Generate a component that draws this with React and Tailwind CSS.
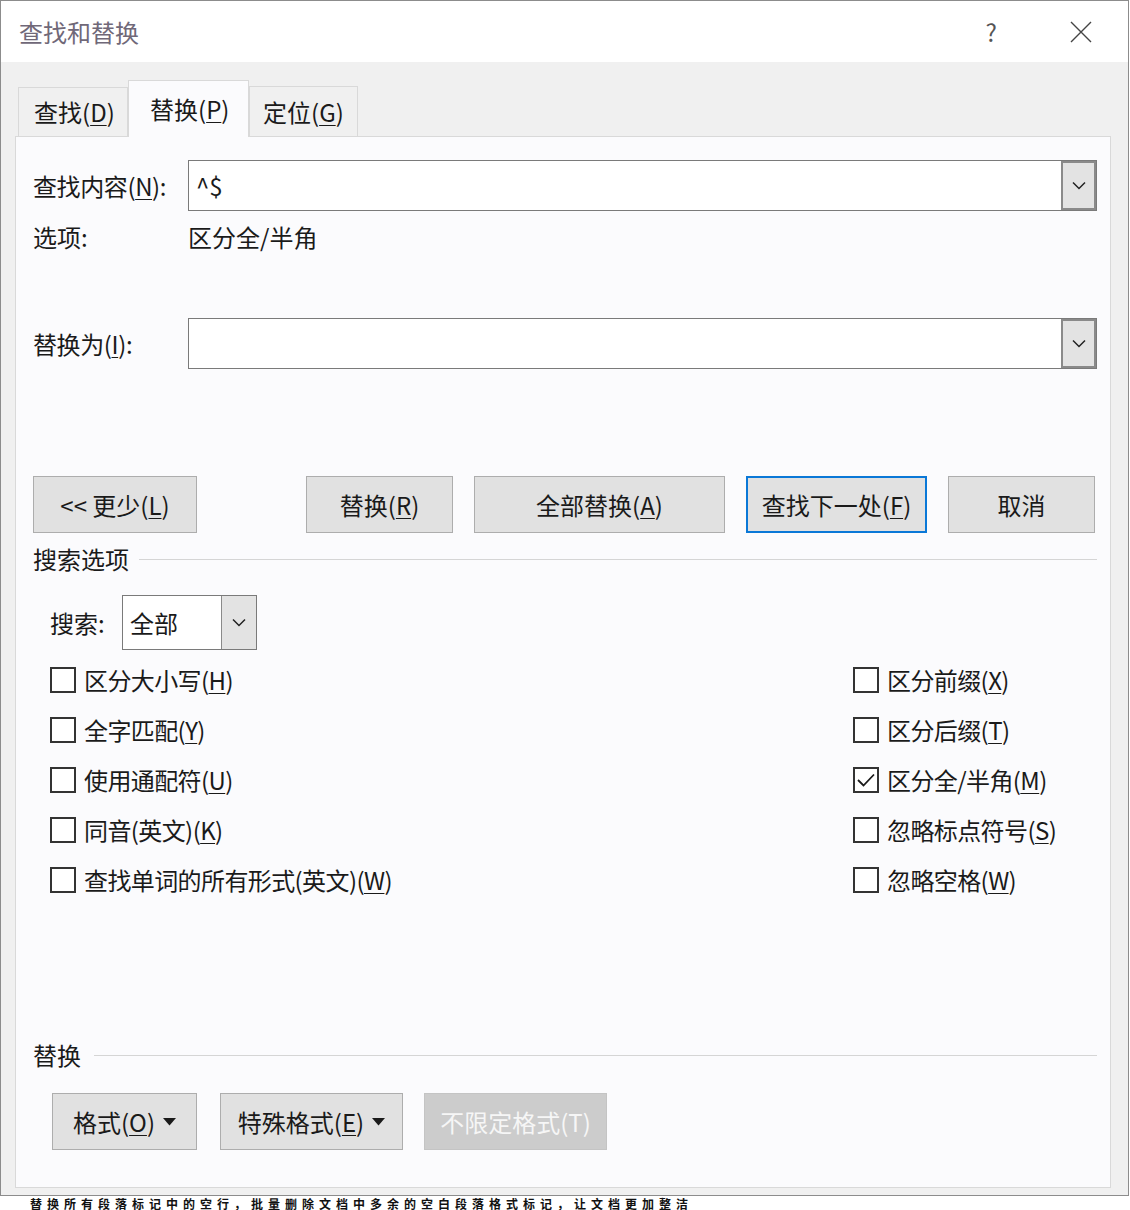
import { useState } from "react";

const FONT = {
  fontFamily: '"Noto Sans CJK SC", "Noto Sans", "Liberation Sans", sans-serif',
};

// Access key letter, underlined like Windows dialogs
const Key = ({ k }) => (
  <>
    (<span className="underline underline-offset-[3px] decoration-1">{k}</span>)
  </>
);

const Chevron = () => (
  <svg width="14" height="9" viewBox="0 0 14 9" fill="none">
    <polyline points="1,1.5 7,7.5 13,1.5" stroke="#222" strokeWidth="1.5" />
  </svg>
);

const Caret = () => (
  <svg width="13" height="8" viewBox="0 0 13 8" className="ml-[8px]">
    <polygon points="0,0 13,0 6.5,7.5" fill="#1a1a1a" />
  </svg>
);

const Combo = ({ value, className }) => (
  <div
    className={`flex h-[51px] items-stretch border border-[#7a7a7a] bg-white ${className}`}
  >
    <div className="flex flex-1 items-center pl-[7px] text-[24px] text-[#1a1a1a]">
      {value}
    </div>
    <div className="flex w-[35px] items-center justify-center border-2 border-[#8a8a8a] bg-[#e3e3e3]">
      <Chevron />
    </div>
  </div>
);

const Button = ({ children, className = "", focused, disabled }) => (
  <button
    className={`flex h-[57px] items-center justify-center text-[24px] ${
      focused
        ? "border-2 border-[#0a78d7] bg-[#e1e1e1]"
        : disabled
          ? "border border-[#c4c4c4] bg-[#cccccc] text-[#f6f6f6]"
          : "border border-[#adadad] bg-[#e1e1e1]"
    } ${disabled ? "" : "text-[#1a1a1a]"} ${className}`}
  >
    {children}
  </button>
);

const Check = ({ label, checked }) => (
  <div className="flex h-[50px] items-center">
    <div className="flex h-[26px] w-[26px] items-center justify-center border-2 border-[#333] bg-white">
      {checked && (
        <svg width="20" height="16" viewBox="0 0 20 16" fill="none">
          <polyline points="2,8 7.5,13.5 18,2.5" stroke="#1a1a1a" strokeWidth="1.8" />
        </svg>
      )}
    </div>
    <span className="ml-[8px] text-[24px] tracking-[-0.6px] text-[#1a1a1a]">{label}</span>
  </div>
);

const GroupTitle = ({ children, lineGap }) => (
  <div className="flex h-[30px] items-center">
    <span className="text-[24px] leading-[30px] text-[#1a1a1a]">{children}</span>
    <div className={`h-px flex-1 bg-[#d5d5d5] ${lineGap}`} />
  </div>
);

export default function App() {
  const [tab, setTab] = useState(1);
  const tabs = [
    ["查找", "D", "h-[49px] w-[110px] pl-[15px]"],
    ["替换", "P", "h-[57px] w-[121px] pl-[21px]"],
    ["定位", "G", "h-[50px] w-[109px] pl-[13px]"],
  ];

  return (
    <div className="h-[1210px] w-[1130px] overflow-hidden bg-white" style={FONT}>
      <div className="flex h-[1196px] w-[1129px] flex-col border border-[#8c8c8c] bg-[#f0f0f0]">
        {/* Title bar */}
        <div className="flex h-[61px] items-center bg-white pl-[18px]">
          <span className="text-[24px] text-[#706878]">查找和替换</span>
          <span className="ml-auto mr-[73px] text-[24px] text-[#555]">?</span>
          <svg width="22" height="22" viewBox="0 0 22 22" className="mr-[36px]">
            <path d="M1 1 L21 21 M21 1 L1 21" stroke="#444" strokeWidth="1.4" />
          </svg>
        </div>

        <div className="flex flex-1 flex-col pl-[14px] pr-[17px] pt-[18px]">
          {/* Tabs */}
          <div className="flex h-[56px] items-end pl-[3px]">
            {tabs.map(([t, k, size], i) => (
              <div
                key={t}
                onClick={() => setTab(i)}
                className={`flex cursor-default items-center border border-b-0 border-[#d9d9d9] text-[24px] text-[#1a1a1a] ${size} ${
                  i === tab ? "z-10 -mb-px bg-[#fbfbfd]" : "bg-[#f0f0f0]"
                }`}
              >
                {t}
                <Key k={k} />
              </div>
            ))}
          </div>

          {/* Panel */}
          <div className="flex h-[1052px] flex-col border border-[#d9d9d9] bg-[#fbfbfd] pl-[17px] pr-[13px] pt-[23px]">
            <div className="flex items-center">
              <span className="w-[155px] text-[24px] tracking-[-0.4px] text-[#1a1a1a]">
                查找内容
                <Key k="N" />:
              </span>
              <Combo value="^$" className="flex-1" />
            </div>
            <div className="flex h-[52px] items-center text-[24px] text-[#1a1a1a]">
              <span className="w-[155px]">选项:</span>
              <span>区分全/半角</span>
            </div>
            <div className="mt-[55px] flex items-center">
              <span className="w-[155px] text-[24px] tracking-[-0.4px] text-[#1a1a1a]">
                替换为
                <Key k="I" />:
              </span>
              <Combo value="" className="flex-1" />
            </div>

            {/* Action buttons */}
            <div className="mt-[107px] flex items-center">
              <Button className="w-[164px]">
                &lt;&lt;&nbsp;更少
                <Key k="L" />
              </Button>
              <Button className="ml-[109px] w-[147px]">
                替换
                <Key k="R" />
              </Button>
              <Button className="ml-[21px] w-[251px]">
                全部替换
                <Key k="A" />
              </Button>
              <Button focused className="ml-[21px] w-[181px]">
                查找下一处
                <Key k="F" />
              </Button>
              <Button className="ml-[21px] w-[147px]">取消</Button>
            </div>

            <div className="mt-[11px]">
              <GroupTitle lineGap="ml-[10px]">搜索选项</GroupTitle>
            </div>

            <div className="mt-[21px] flex items-center pl-[17px]">
              <span className="w-[72px] text-[24px] text-[#1a1a1a]">搜索:</span>
              <div className="flex h-[55px] w-[135px] items-stretch border border-[#7a7a7a] bg-white">
                <div className="flex flex-1 items-center pl-[7px] text-[24px] text-[#1a1a1a]">
                  全部
                </div>
                <div className="flex w-[35px] items-center justify-center border-l border-[#8a8a8a] bg-[#e3e3e3]">
                  <Chevron />
                </div>
              </div>
            </div>

            {/* Options */}
            <div className="mt-[5px] flex pl-[17px]">
              <div className="flex flex-1 flex-col">
                <Check label={<>区分大小写<Key k="H" /></>} />
                <Check label={<>全字匹配<Key k="Y" /></>} />
                <Check label={<>使用通配符<Key k="U" /></>} />
                <Check label={<>同音(英文)<Key k="K" /></>} />
                <Check label={<>查找单词的所有形式(英文)<Key k="W" /></>} />
              </div>
              <div className="flex w-[244px] flex-col">
                <Check label={<>区分前缀<Key k="X" /></>} />
                <Check label={<>区分后缀<Key k="T" /></>} />
                <Check checked label={<>区分全/半角<Key k="M" /></>} />
                <Check label={<>忽略标点符号<Key k="S" /></>} />
                <Check label={<>忽略空格<Key k="W" /></>} />
              </div>
            </div>

            <div className="mt-[135px]">
              <GroupTitle lineGap="ml-[13px]">替换</GroupTitle>
            </div>

            <div className="mt-[23px] flex items-center pl-[19px]">
              <Button className="w-[145px]">
                格式
                <Key k="O" />
                <Caret />
              </Button>
              <Button className="ml-[23px] w-[183px]">
                特殊格式
                <Key k="E" />
                <Caret />
              </Button>
              <Button disabled className="ml-[21px] w-[183px]">
                不限定格式(T)
              </Button>
            </div>
          </div>
        </div>
      </div>

      {/* Document text peeking out below the dialog */}
      <div className="flex h-[14px] items-center overflow-hidden pl-[30px]">
        <span className="whitespace-nowrap text-[12px] font-bold leading-[13px] tracking-[5px] text-[#111]">
          替换所有段落标记中的空行，批量删除文档中多余的空白段落格式标记，让文档更加整洁
        </span>
      </div>
    </div>
  );
}
